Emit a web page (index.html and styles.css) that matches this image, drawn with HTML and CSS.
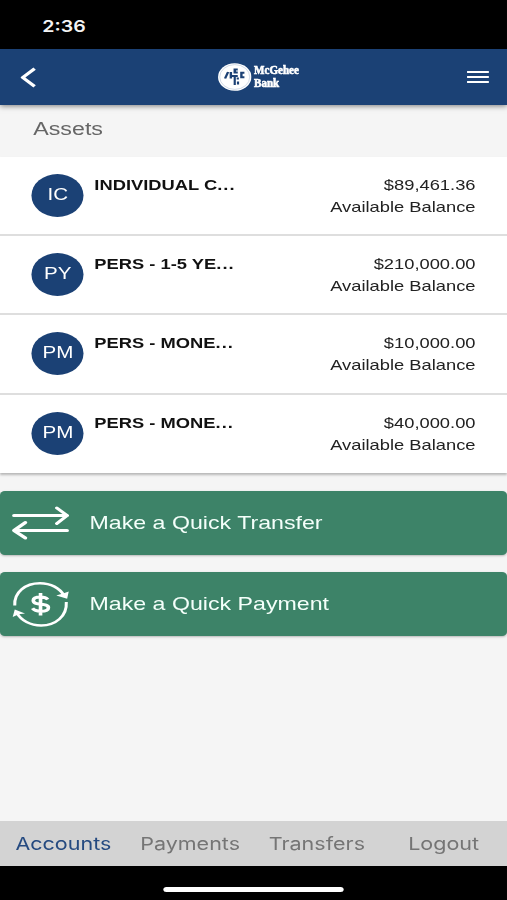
FILE: index.html
```html
<!DOCTYPE html>
<html lang="en">

<head>
  <meta charset="UTF-8" />
  <meta name="viewport" content="width=device-width, initial-scale=1.0" />
  <title>McGehee Bank</title>
  <link rel="stylesheet" href="styles.css">
</head>

<body>
  <div class="screen">
    <div class="status">2:36</div>
    <header class="header">
      <svg class="back" viewBox="0 0 14 22" fill="none" stroke="#fff" stroke-width="3.2">
        <path d="M12.5 1.5 2 11l10.500 9.500" />
      </svg>
      <div class="logo">
        <svg class="logo-mark" viewBox="0 0 28 28">
          <circle cx="14" cy="14" r="13.8" fill="#fff" />
          <circle cx="14" cy="14" r="12.4" fill="none" stroke="#b9c7da" stroke-width=".6" />
          <g fill="none" stroke="#1c4175">
            <path d="m6 15.500 2.500-6.500M10.800 9v6.500" stroke-width="2" />
            <path d="M16.500 6.500h-2.500v3h2.500M22 9.800h-2.500v4.500h2.500" stroke-width="2" />
            <path d="M14 13v9M11.500 13h5M16.500 14.500v2M16.700 18.500v3" stroke-width="1.800" />
          </g>
        </svg>
        <div class="logo-name">McGehee<br>Bank</div>
      </div>
      <div class="menu">
        <span></span>
        <span></span>
        <span></span>
      </div>
    </header>

    <main class="content">
      <h2 class="title">Assets</h2>
      <ul class="accounts">
        <li>
          <div class="avatar">IC</div>
          <div class="name">INDIVIDUAL C<span>...</span></div>
          <div class="balance">$89,461.36<br>Available Balance</div>
        </li>
        <li>
          <div class="avatar">PY</div>
          <div class="name">PERS - 1-5 YE<span>...</span></div>
          <div class="balance">$210,000.00<br>Available Balance</div>
        </li>
        <li>
          <div class="avatar">PM</div>
          <div class="name">PERS - MONE<span>...</span></div>
          <div class="balance">$10,000.00<br>Available Balance</div>
        </li>
        <li>
          <div class="avatar">PM</div>
          <div class="name">PERS - MONE<span>...</span></div>
          <div class="balance">$40,000.00<br>Available Balance</div>
        </li>
      </ul>

      <button class="action">
        <svg viewBox="0 0 48 46" fill="none" stroke="#fff" stroke-width="3" stroke-linecap="round" stroke-linejoin="round">
          <path d="M2.500 15.500H46.500M38 8l8.500 7.500-8.500 8" />
          <path d="M46.500 30.500H3M12 22.500l-9.500 8 9.500 7.500" />
        </svg>
        Make a Quick Transfer
      </button>
      <button class="action">
        <svg viewBox="0 0 48 46" fill="none" stroke="#fff" stroke-width="2.500">
          <path d="M3.200 24.500C2.500 11 12 2.200 24 2.200c9 0 16.500 5 20 12.500" />
          <path d="M45.800 21C46.500 35 37 44.500 25 44.500c-9 0-16.500-5-20-12.500" />
          <path d="m37.500 14.500 9 3.200 1.300-7.200-3.500 1.500zM1.500 36l1.700-7.500 8.500 4-5.200.8z" fill="#fff" stroke="none" />
          <path d="M30.500 18.500c-1.200-1.700-3.300-2.500-6-2.500-3.700 0-6 1.300-6 3.500 0 5.700 12.500 2 12.500 7.200 0 2.300-2.500 3.500-6.300 3.500-3.300 0-5.700-1-6.800-2.900M24.500 12v22.500" stroke-width="3" />
        </svg>
        Make a Quick Payment
      </button>
    </main>

    <nav class="tabs">
      <a class="active">Accounts</a>
      <a>Payments</a>
      <a>Transfers</a>
      <a>Logout</a>
    </nav>
    <div class="home"><span></span></div>
  </div>
</body>

</html>
```
FILE: styles.css
```css
* {
  box-sizing: border-box;
}

body {
  margin: 0;
  overflow: hidden;
  background: #f5f5f5;
}

.screen {
  width: 419px;
  height: 900px;
  display: flex;
  flex-direction: column;
  transform: scaleX(1.21);
  transform-origin: 0 0;
  background: #f5f5f5;
  font-family: "Liberation Sans", Arial, sans-serif;
}

.status {
  height: 49px;
  padding-left: 35px;
  background: #000;
  color: #f4f4f4;
  font: 600 16.2px/52px Inter, sans-serif;
}

.header {
  height: 56px;
  padding: 0 15px 0 16.5px;
  display: flex;
  align-items: center;
  justify-content: space-between;
  background: #1b4175;
  box-shadow: 0 1px 5px rgba(0, 0, 0, 0.5);
}

.back {
  width: 13px;
  height: 21px;
}

.logo {
  display: flex;
  align-items: center;
  gap: 2px;
  padding-left: 9px;
}

.logo-mark {
  width: 28px;
  height: 28px;
}

.logo-name {
  width: 34px;
  color: #fff;
  font: bold 12px/13px "Liberation Serif", serif;
  -webkit-text-stroke: 0.6px #fff;
  transform: scaleX(0.76);
  transform-origin: 0 0;
}

.menu {
  width: 18px;
  display: flex;
  flex-direction: column;
  gap: 3px;
}

.menu span {
  height: 2px;
  background: #fff;
}

.content {
  flex: 1;
}

.title {
  height: 52px;
  margin: 0;
  padding-left: 27.5px;
  color: #666;
  font-size: 19.2px;
  font-weight: normal;
  line-height: 47px;
}

.accounts {
  margin: 0 0 18px;
  padding: 0;
  list-style: none;
  background: #fff;
  box-shadow: 0 2px 2px rgba(0, 0, 0, 0.25);
}

.accounts li {
  height: 79.2px;
  padding: 17px 26px 0 26.3px;
  display: flex;
  border-bottom: 2px solid #dedede;
  color: #222;
  font-size: 15.15px;
  line-height: 22px;
}

.accounts li:last-child {
  height: 78px;
  border-bottom: none;
}

.avatar {
  width: 43px;
  height: 43px;
  border-radius: 50%;
  background: #1b4175;
  color: #fff;
  font-size: 17px;
  line-height: 42px;
  text-align: center;
}

.name {
  margin-left: 8.7px;
  color: #111;
  font-weight: bold;
}

.name span {
  letter-spacing: 0.9px;
}

.balance {
  margin-left: auto;
  text-align: right;
}

.action {
  width: 100%;
  height: 64px;
  margin: 0 0 17px;
  padding: 0 9px;
  display: flex;
  align-items: center;
  gap: 17px;
  border: none;
  border-radius: 4px;
  background: #3d8368;
  box-shadow: 0 1px 2px rgba(0, 0, 0, 0.25);
  color: #f4fffa;
  font-family: inherit;
  font-size: 19.15px;
}

.action svg {
  width: 48px;
  height: 46px;
}

.tabs {
  height: 45px;
  display: flex;
  background: #d3d3d3;
  color: #757575;
  font: 17.8px/45px Inter, sans-serif;
}

.tabs a {
  flex: 1;
  text-align: center;
}

.tabs .active {
  color: #254a80;
}

.home {
  height: 34px;
  padding-top: 20.5px;
  background: #000;
}

.home span {
  display: block;
  width: 149px;
  height: 5.5px;
  margin: 0 auto;
  border-radius: 3px;
  background: #fff;
}
```
